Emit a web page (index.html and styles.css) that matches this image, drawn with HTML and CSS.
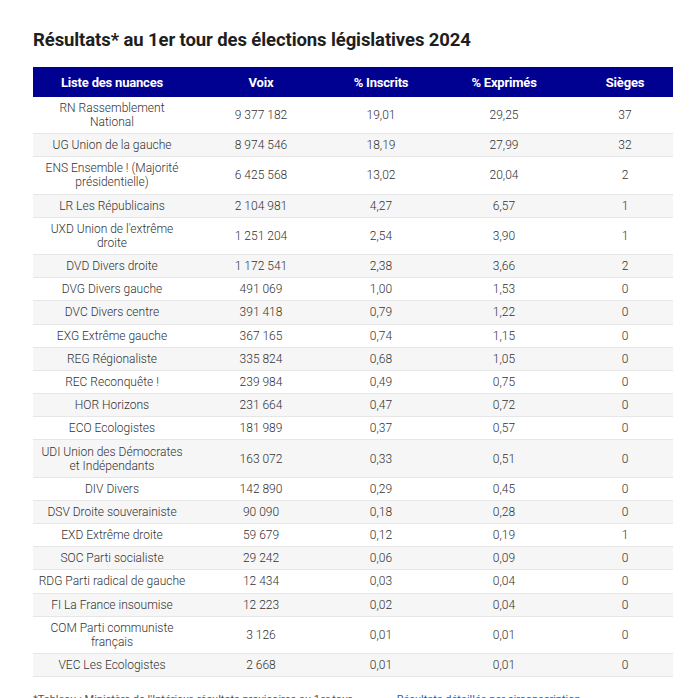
FILE: index.html
```html
<!DOCTYPE html>
<html lang="fr">
<head>
<meta charset="utf-8">
<title>Résultats</title>
<link rel="stylesheet" href="styles.css">
</head>
<body>
<div class="wrap">
  <h2 class="title">Résultats* au 1er tour des élections législatives 2024</h2>
  <table class="results">
    <colgroup>
      <col class="c1"><col class="c2"><col class="c3"><col class="c4"><col class="c5">
    </colgroup>
    <thead>
      <tr><th>Liste des nuances</th><th>Voix</th><th>% Inscrits</th><th>% Exprimés</th><th>Sièges</th></tr>
    </thead>
    <tbody>
      <tr><td>RN Rassemblement<br>National</td><td>9 377 182</td><td>19,01</td><td>29,25</td><td>37</td></tr>
      <tr><td>UG Union de la gauche</td><td>8 974 546</td><td>18,19</td><td>27,99</td><td>32</td></tr>
      <tr><td>ENS Ensemble ! (Majorité<br>présidentielle)</td><td>6 425 568</td><td>13,02</td><td>20,04</td><td>2</td></tr>
      <tr><td>LR Les Républicains</td><td>2 104 981</td><td>4,27</td><td>6,57</td><td>1</td></tr>
      <tr><td>UXD Union de l'extrême<br>droite</td><td>1 251 204</td><td>2,54</td><td>3,90</td><td>1</td></tr>
      <tr><td>DVD Divers droite</td><td>1 172 541</td><td>2,38</td><td>3,66</td><td>2</td></tr>
      <tr><td>DVG Divers gauche</td><td>491 069</td><td>1,00</td><td>1,53</td><td>0</td></tr>
      <tr><td>DVC Divers centre</td><td>391 418</td><td>0,79</td><td>1,22</td><td>0</td></tr>
      <tr><td>EXG Extrême gauche</td><td>367 165</td><td>0,74</td><td>1,15</td><td>0</td></tr>
      <tr><td>REG Régionaliste</td><td>335 824</td><td>0,68</td><td>1,05</td><td>0</td></tr>
      <tr><td>REC Reconquête !</td><td>239 984</td><td>0,49</td><td>0,75</td><td>0</td></tr>
      <tr><td>HOR Horizons</td><td>231 664</td><td>0,47</td><td>0,72</td><td>0</td></tr>
      <tr><td>ECO Ecologistes</td><td>181 989</td><td>0,37</td><td>0,57</td><td>0</td></tr>
      <tr><td>UDI Union des Démocrates<br>et Indépendants</td><td>163 072</td><td>0,33</td><td>0,51</td><td>0</td></tr>
      <tr><td>DIV Divers</td><td>142 890</td><td>0,29</td><td>0,45</td><td>0</td></tr>
      <tr><td>DSV Droite souverainiste</td><td>90 090</td><td>0,18</td><td>0,28</td><td>0</td></tr>
      <tr><td>EXD Extrême droite</td><td>59 679</td><td>0,12</td><td>0,19</td><td>1</td></tr>
      <tr><td>SOC Parti socialiste</td><td>29 242</td><td>0,06</td><td>0,09</td><td>0</td></tr>
      <tr><td>RDG Parti radical de gauche</td><td>12 434</td><td>0,03</td><td>0,04</td><td>0</td></tr>
      <tr><td>FI La France insoumise</td><td>12 223</td><td>0,02</td><td>0,04</td><td>0</td></tr>
      <tr><td>COM Parti communiste<br>français</td><td>3 126</td><td>0,01</td><td>0,01</td><td>0</td></tr>
      <tr><td>VEC Les Ecologistes</td><td>2 668</td><td>0,01</td><td>0,01</td><td>0</td></tr>
    </tbody>
  </table>
  <p class="note">*Tableau : Ministère de l'Intérieur, résultats provisoires au 1er tour. <a href="#">Résultats détaillés par circonscription</a></p>
</div>
</body>
</html>
```

FILE: styles.css
```css
html, body {
  margin: 0;
  padding: 0;
  background: #ffffff;
}
body {
  font-family: Roboto, "Liberation Sans", Arial, sans-serif;
  color: #3a3a3a;
}
.wrap {
  padding: 29px 0 0 33px;
  width: 640px;
}
.title {
  margin: 0;
  font-size: 18.5px;
  line-height: 22px;
  font-weight: 700;
  color: #1e1e1e;
  letter-spacing: -0.1px;
}
.results {
  margin-top: 16px;
  width: 640px;
  border-collapse: collapse;
  table-layout: fixed;
  font-size: 12px;
}
.c1 { width: 158px; }
.c2 { width: 140px; }
.c3 { width: 100px; }
.c4 { width: 146px; }
.c5 { width: 96px; }
.results th {
  background: #000091;
  color: #ffffff;
  font-weight: 700;
  font-size: 13px;
  height: 30px;
  padding: 0;
  text-align: center;
  letter-spacing: -0.2px;
}
.results td {
  text-align: center;
  padding: 4.1px 2px 4.1px;
  line-height: 14px;
  border-bottom: 1px solid #e6e6e6;
  font-weight: 300;
  color: #333333;
}
.results tbody tr:nth-child(even) td {
  background: #f6f6f6;
}
.note {
  margin: 16px 0 0 0;
  font-size: 11px;
  line-height: 14px;
  color: #555555;
  white-space: nowrap;
}
.note a {
  color: #2a5fb0;
  text-decoration: none;
  margin-left: 40px;
}
```
